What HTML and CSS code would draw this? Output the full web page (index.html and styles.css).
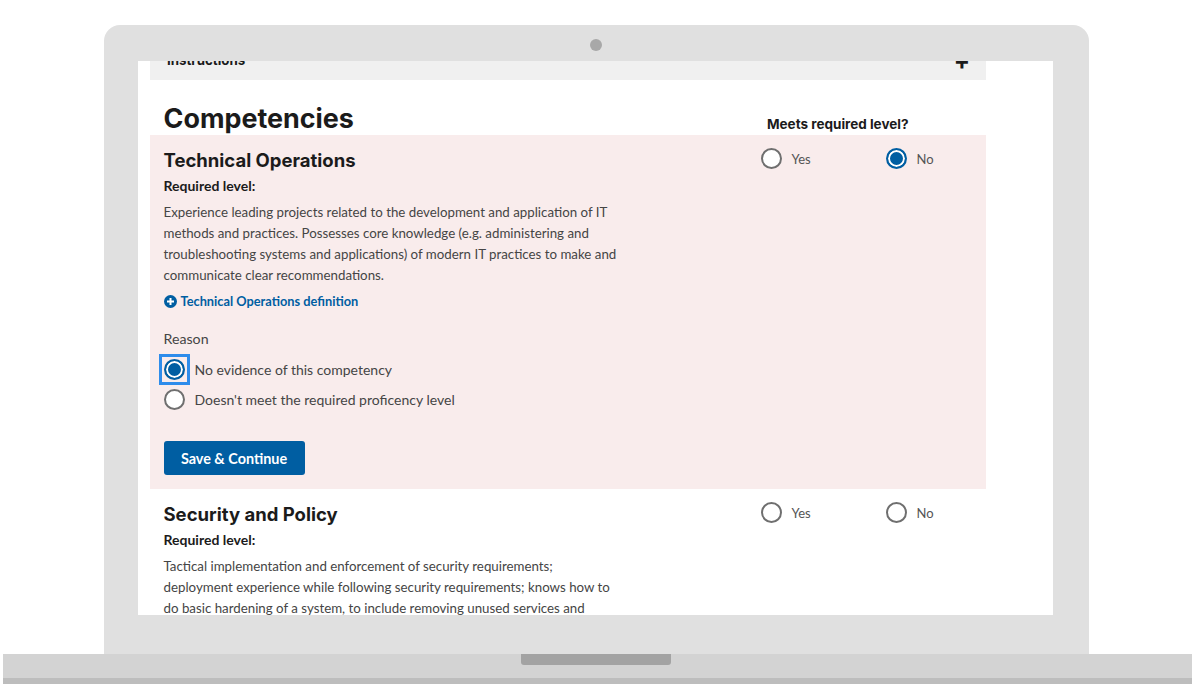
FILE: index.html
```html
<!DOCTYPE html>
<html lang="en">

<head>
  <meta charset="UTF-8" />
  <meta name="viewport" content="width=device-width, initial-scale=1.0" />
  <title>Competencies</title>
  <link rel="stylesheet" href="styles.css">
</head>

<body>
  <div class="laptop">
    <div class="lid">
      <div class="camera"></div>
      <div class="screen">
        <div class="page">
          <div class="accordion">
            <span>Instructions</span>
            <span class="accordion-plus">+</span>
          </div>

          <div class="heading-row">
            <h1>Competencies</h1>
            <div class="meets">Meets required level?</div>
          </div>

          <div class="competency failed">
            <div class="competency-text">
              <h2>Technical Operations</h2>
              <h3>Required level:</h3>
              <p>Experience leading projects related to the development and application of IT methods and practices. Possesses core knowledge (e.g. administering and troubleshooting systems and applications) of modern IT practices to make and communicate clear recommendations.</p>
              <a class="definition" href="#">
                <svg width="13" height="13" viewBox="0 0 13 13">
                  <circle cx="6.5" cy="6.5" r="6.5" fill="#005ea2" />
                  <path d="M6.5 3v7M3 6.5h7" stroke="#fff" stroke-width="2" />
                </svg>
                Technical Operations definition
              </a>
              <div class="reason-label">Reason</div>
              <div class="reason">
                <span class="radio checked focused"></span>
                <span>No evidence of this competency</span>
              </div>
              <div class="reason">
                <span class="radio"></span>
                <span>Doesn't meet the required proficency level</span>
              </div>
              <button class="save">Save &amp; Continue</button>
            </div>
            <div class="choices">
              <div class="choice"><span class="radio"></span>Yes</div>
              <div class="choice"><span class="radio checked"></span>No</div>
            </div>
          </div>

          <div class="competency">
            <div class="competency-text">
              <h2>Security and Policy</h2>
              <h3>Required level:</h3>
              <p>Tactical implementation and enforcement of security requirements; deployment experience while following security requirements; knows how to do basic hardening of a system, to include removing unused services and</p>
            </div>
            <div class="choices">
              <div class="choice"><span class="radio"></span>Yes</div>
              <div class="choice"><span class="radio"></span>No</div>
            </div>
          </div>
        </div>
      </div>
    </div>
    <div class="base">
      <div class="notch"></div>
    </div>
  </div>
</body>

</html>
```

FILE: styles.css
```css
:root {
  --lid: #e0e0e0;
  --base: #d3d3d3;
  --base-edge: #bdbdbd;
  --blue: #005ea2;
  --pink: #f9ecec;
  --text: #1b1b1b;
  --body: #454545;
}

* {
  margin: 0;
  padding: 0;
  box-sizing: border-box;
}

html,
body {
  height: 100%;
  overflow: hidden;
}

body {
  background-color: #fff;
  color: var(--text);
  font-family: 'Lato', sans-serif;
}

.laptop {
  display: flex;
  flex-direction: column;
  padding-top: 25px;
}

.lid {
  flex-shrink: 0;
  display: flex;
  flex-direction: column;
  align-items: center;
  width: 985px;
  height: 629px;
  margin-left: 104px;
  padding: 14px 36px 39px 34px;
  background-color: var(--lid);
  border-radius: 16px 16px 0 0;
}

.camera {
  flex-shrink: 0;
  width: 12px;
  height: 12px;
  margin-bottom: 10px;
  border-radius: 50%;
  background-color: #a8a8a8;
}

.screen {
  width: 100%;
  height: 554px;
  overflow: hidden;
  background-color: #fff;
}

.base {
  flex-shrink: 0;
  display: flex;
  justify-content: center;
  width: 1189px;
  height: 30px;
  margin-left: 3px;
  padding-right: 4px;
  background-color: var(--base);
  border-bottom: 6px solid var(--base-edge);
}

.notch {
  width: 150px;
  height: 11px;
  background-color: #a3a3a3;
  border-radius: 0 0 3px 3px;
}

.page {
  margin-top: -20px;
  padding: 0 67px 0 12px;
}

.accordion {
  display: flex;
  justify-content: space-between;
  align-items: center;
  height: 39px;
  padding: 0 16px 2px 17px;
  background-color: #f0f0f0;
  font-family: 'Inter', sans-serif;
  font-size: 13.3px;
  font-weight: 700;
}

.accordion-plus {
  margin-top: 2px;
  font-size: 24px;
}

.heading-row {
  display: flex;
  height: 55px;
  padding-left: 13.5px;
}

h1 {
  width: 603.5px;
  padding-top: 21px;
  font-family: 'Inter', sans-serif;
  font-size: 26.9px;
  font-weight: 700;
  line-height: 34px;
}

.meets {
  padding-top: 35px;
  font-family: 'Inter', sans-serif;
  font-size: 13.5px;
  font-weight: 700;
  line-height: 18px;
  white-space: nowrap;
}

.competency {
  display: flex;
  padding: 14px 0 14px 13.5px;
}

.failed {
  background-color: var(--pink);
}

.competency-text {
  flex: none;
  width: 597px;
}

h2 {
  font-family: 'Inter', sans-serif;
  font-size: 18.5px;
  font-weight: 700;
  line-height: 23px;
}

h3 {
  margin-top: 4px;
  font-size: 14px;
  font-weight: 700;
  line-height: 20px;
}

p {
  width: 460px;
  margin-top: 6px;
  color: var(--body);
  font-size: 13.3px;
  line-height: 21px;
}

.definition {
  display: flex;
  align-items: center;
  gap: 4px;
  margin-top: 5px;
  color: var(--blue);
  font-size: 12.8px;
  font-weight: 700;
  line-height: 20px;
  text-decoration: none;
}

.reason-label {
  margin-top: 18px;
  color: var(--body);
  font-size: 14.2px;
  line-height: 20px;
}

.reason {
  display: flex;
  align-items: center;
  gap: 10px;
  height: 30px;
  color: var(--body);
  font-size: 14px;
}

.reason-label + .reason {
  margin-top: 5px;
}

.radio {
  position: relative;
  flex-shrink: 0;
  width: 21px;
  height: 21px;
  border: 2px solid #6f6f6f;
  border-radius: 50%;
  background-color: #fff;
}

.radio.checked {
  border-color: var(--blue);
  background-color: var(--blue);
  box-shadow: inset 0 0 0 2px #fff;
}

/* square focus ring sits over the radio */
.radio.focused::after {
  content: "";
  position: absolute;
  top: -7px;
  left: -7px;
  box-sizing: border-box;
  width: 31px;
  height: 31px;
  border: 3px solid #2e8ceb;
}

.save {
  display: block;
  width: 141px;
  height: 34px;
  margin-top: 27px;
  border: none;
  border-radius: 3px;
  background-color: var(--blue);
  color: #fff;
  font-family: 'Lato', sans-serif;
  font-size: 14.4px;
  font-weight: 700;
}

.choices {
  display: flex;
  flex: 1;
  margin-top: -1px;
}

.choice {
  display: flex;
  align-items: center;
  gap: 10px;
  width: 125px;
  height: 21px;
  color: #555;
  font-size: 13px;
}

.choice:last-child {
  width: auto;
}
```
